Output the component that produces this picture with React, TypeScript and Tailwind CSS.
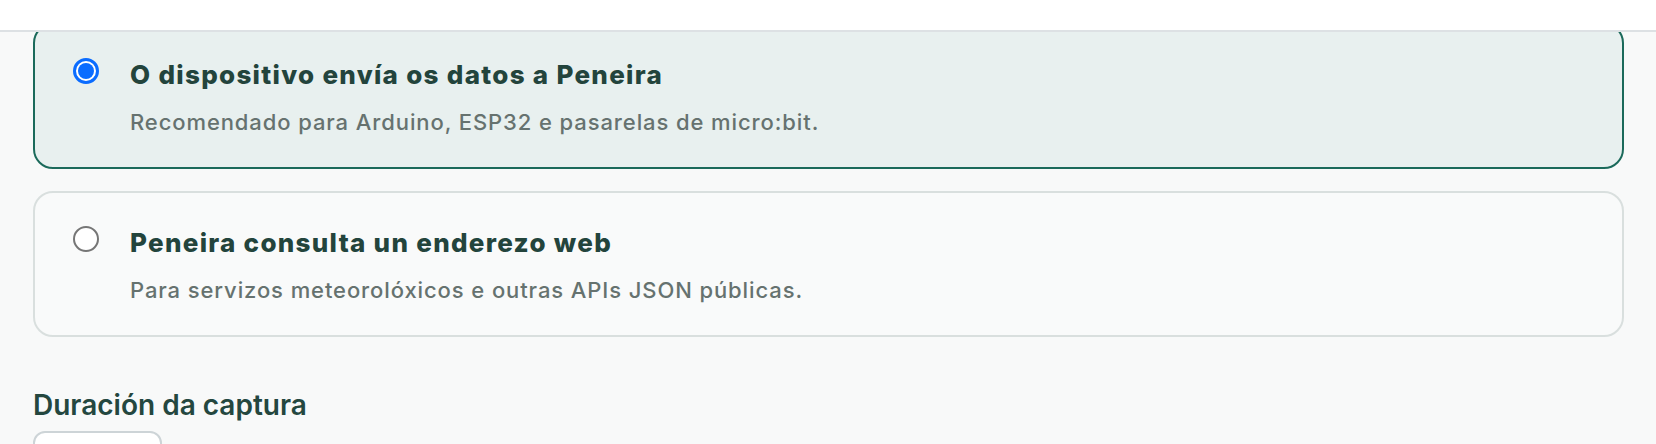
import React from "react";

function Radio({ checked }: { checked: boolean }) {
  if (checked) {
    return (
      <div className="-mt-[1px] flex h-[26px] w-[26px] shrink-0 items-center justify-center rounded-full border-[3px] border-[#0a6cff] bg-white">
        <div className="h-[16px] w-[16px] rounded-full bg-[#0a6cff]" />
      </div>
    );
  }
  return <div className="-mt-[1px] h-[26px] w-[26px] shrink-0 rounded-full border-[2px] border-[#767676] bg-white" />;
}

function Option({
  checked,
  title,
  desc,
  className,
}: {
  checked: boolean;
  title: string;
  desc: string;
  className: string;
}) {
  return (
    <div className={`flex items-start gap-[31px] rounded-[20px] border-2 px-[38px] pt-[34px] pb-[30px] ${className}`}>
      <Radio checked={checked} />
      <div className="flex flex-col">
        <div className="text-[26px] font-extrabold leading-[32px] tracking-[1.3px] text-[#23443c]">{title}</div>
        <div className="mt-[16px] text-[22px] font-medium leading-[30px] tracking-[0.9px] text-[#66726f]">{desc}</div>
      </div>
    </div>
  );
}

export default function App() {
  return (
    <div className="min-h-[444px] bg-[#f8f9f9] font-['Inter',sans-serif]">
      <div className="relative z-10 h-[32px] border-b-2 border-[#dde1e4] bg-white" />
      <div className="flex flex-col pl-[33px] pr-[32px]">
        <Option
          checked
          title="O dispositivo envía os datos a Peneira"
          desc="Recomendado para Arduino, ESP32 e pasarelas de micro:bit."
          className="-mt-[9px] border-[#1b6a5b] bg-[#e8f0ef]"
        />
        <Option
          checked={false}
          title="Peneira consulta un enderezo web"
          desc="Para servizos meteorolóxicos e outras APIs JSON públicas."
          className="mt-[22px] border-[#d9dfde] bg-[#f9fafa]"
        />
        <div className="mt-[50px] text-[28px] font-semibold leading-[36px] text-[#24473f]">Duración da captura</div>
        <div className="mt-[8px] h-[40px] w-[129px] rounded-[12px] border-2 border-[#cdd4d7] bg-white" />
      </div>
    </div>
  );
}
